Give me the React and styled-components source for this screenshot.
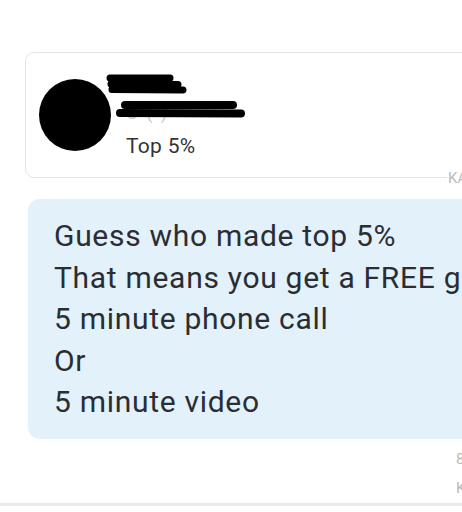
import React from 'react';
import styled, { createGlobalStyle } from 'styled-components';

const GlobalStyle = createGlobalStyle`
  html, body {
    margin: 0;
    padding: 0;
    background: #fff;
  }
  body {
    width: 462px;
    height: 512px;
    overflow: hidden;
    font-family: Roboto, "Noto Sans", Arial, sans-serif;
  }
`;

const Page = styled.div`
  padding-top: 52px;
  width: 462px;
  overflow: hidden;
`;

const CardRow = styled.div`
  position: relative;
  padding-left: 25px;
  height: 126px;
`;

const Card = styled.div`
  box-sizing: border-box;
  width: 480px;
  height: 126px;
  border: 1px solid #e4e4e4;
  border-radius: 9px;
  background: #fff;
  display: flex;
  align-items: flex-start;
  padding-left: 13px;
`;

const Avatar = styled.div`
  flex: none;
  width: 72px;
  height: 72px;
  margin-top: 26px;
  border-radius: 50%;
  background: #000;
`;

const Info = styled.div`
  margin-left: 15px;
  margin-top: 21px;
  display: flex;
  flex-direction: column;
`;

const Scribble = styled.svg`
  display: block;
  overflow: visible;
`;

const NameScribble = styled(Scribble)`
  margin-left: -20px;
`;

const Handle = styled.div`
  position: relative;
  height: 40px;
`;

const HandleText = styled.div`
  padding-top: 8px;
  font-size: 18px;
  line-height: 22px;
  color: #c9c9c9;
  letter-spacing: 2px;
`;

const HandleScribble = styled(Scribble)`
  position: absolute;
  top: 6px;
  left: -10px;
`;

const Rank = styled.div`
  font-size: 21px;
  line-height: 24px;
  letter-spacing: 0.3px;
  color: #333;
`;

const Stamp = styled.span`
  position: absolute;
  left: 447px;
  top: 119px;
  padding-left: 1px;
  background: #fff;
  font-size: 15px;
  line-height: 15px;
  color: #bababa;
  white-space: nowrap;
`;

const Bubble = styled.div`
  box-sizing: border-box;
  margin: 21px 0 0 28px;
  width: 480px;
  padding: 16px 0 16px 26px;
  border-radius: 12px;
  background: #e3f1fb;
  color: #2a2e33;
  font-size: 30px;
  line-height: 41.5px;
  letter-spacing: 0.7px;
  white-space: nowrap;
`;

const Meta = styled.div`
  margin-top: 6px;
  padding-left: 456px;
  font-size: 15px;
  line-height: 29px;
  color: #b8b8b8;
  white-space: nowrap;
`;

const Divider = styled.div`
  height: 3px;
  background: #e9e9e9;
`;

const lines = [
  'Guess who made top 5%',
  'That means you get a FREE gift',
  '5 minute phone call',
  'Or',
  '5 minute video',
];

export default function App() {
  return (
    <>
      <GlobalStyle />
      <Page>
        <CardRow>
          <Card>
            <Avatar />
            <Info>
              <NameScribble width="90" height="20" viewBox="0 0 90 20">
                <g stroke="#000" strokeWidth="7" strokeLinecap="round" fill="none">
                  <path d="M4 4 L64 4" />
                  <path d="M5 10 L72 10.5" />
                  <path d="M6 15.5 L77 16" />
                </g>
              </NameScribble>
              <Handle>
                <HandleText>C ( )</HandleText>
                <HandleScribble width="130" height="20" viewBox="0 0 130 20">
                  <g stroke="#000" strokeWidth="8" strokeLinecap="round" fill="none">
                    <path d="M9 5 L117 5" />
                    <path d="M4 13 L125 13.5" />
                  </g>
                </HandleScribble>
              </Handle>
              <Rank>Top 5%</Rank>
            </Info>
          </Card>
          <Stamp>KA</Stamp>
        </CardRow>
        <Bubble>
          {lines.map((l) => (
            <div key={l}>{l}</div>
          ))}
        </Bubble>
        <Meta>
          <div>8:12</div>
          <div>Kl</div>
        </Meta>
        <Divider />
      </Page>
    </>
  );
}
